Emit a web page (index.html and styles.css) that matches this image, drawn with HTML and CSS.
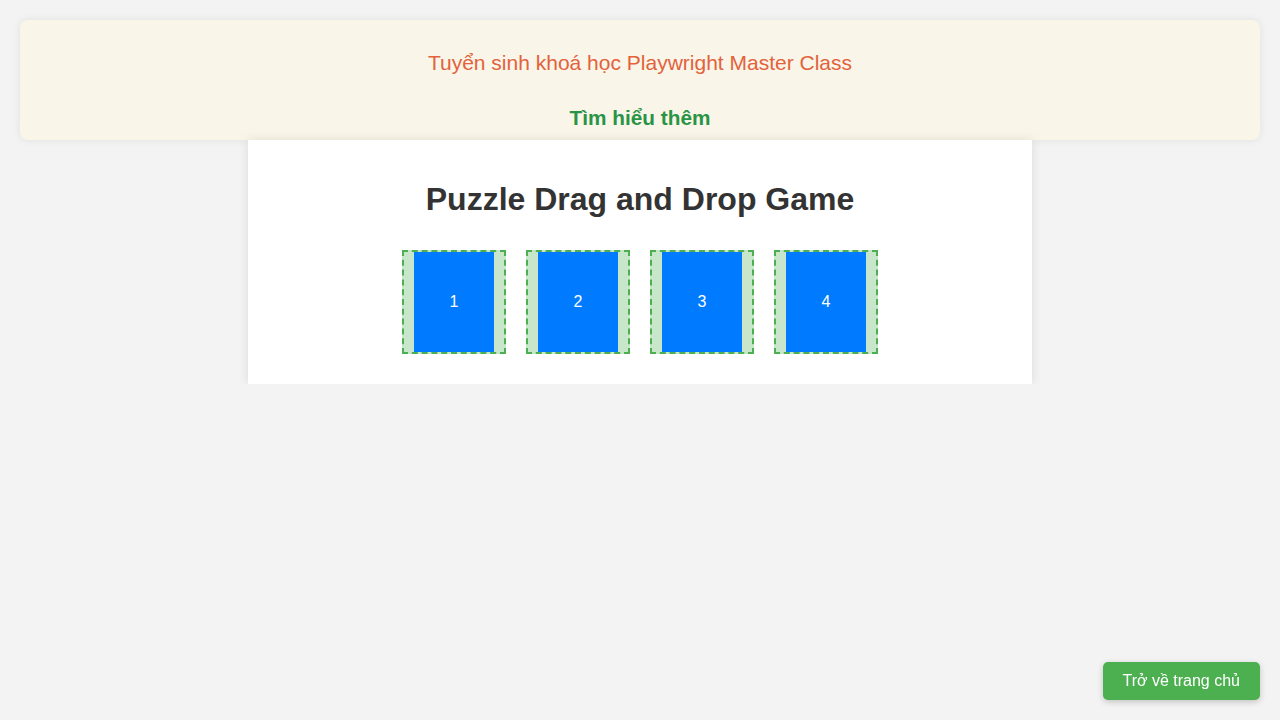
FILE: index.html
```html
<!DOCTYPE html>
<html lang="vi">
<head>
<meta charset="utf-8">
<title>Puzzle Drag and Drop Game</title>
<link rel="stylesheet" href="styles.css">
</head>
<body>
  <div class="banner">
    <p class="banner-title">Tuyển sinh khoá học Playwright Master Class</p>
    <a class="banner-link" href="#">Tìm hiểu thêm</a>
  </div>
  <div class="card">
    <h1 class="card-title">Puzzle Drag and Drop Game</h1>
    <div class="zones">
      <div class="zone"><div class="piece">1</div></div>
      <div class="zone"><div class="piece">2</div></div>
      <div class="zone"><div class="piece">3</div></div>
      <div class="zone"><div class="piece">4</div></div>
    </div>
  </div>
  <a class="home-btn" href="#">Trở về trang chủ</a>
</body>
</html>
```
FILE: styles.css
```css
* { box-sizing: border-box; }
html, body { margin: 0; padding: 0; }
body {
  background: #f3f3f3;
  font-family: "Liberation Sans", Arial, sans-serif;
  padding: 20px 20px 0;
}
.banner {
  position: relative;
  height: 120px;
  background: #f9f5e9;
  border-radius: 8px;
  box-shadow: 0 0 8px rgba(0,0,0,0.08);
  text-align: center;
  padding-top: 31px;
}
.banner-title {
  margin: 0;
  font-size: 21px;
  line-height: 24px;
  color: #e3623b;
}
.banner-link {
  display: inline-block;
  margin-top: 31px;
  font-size: 20.8px;
  line-height: 24px;
  font-weight: bold;
  color: #2a9446;
  text-decoration: none;
}
.card {
  position: relative;
  width: 784px;
  margin: 0 auto;
  background: #fff;
  padding: 20px 20px 20px;
  box-shadow: 0 0 10px rgba(0,0,0,0.1);
  text-align: center;
}
.card-title {
  margin: 21px 0 22px;
  font-size: 32px;
  line-height: 37px;
  font-weight: bold;
  color: #333;
}
.zones {
  display: flex;
  justify-content: center;
}
.zone {
  width: 104px;
  height: 104px;
  margin: 10px;
  border: 2px dashed #4caf50;
  background: #c8e6c9;
  display: flex;
  justify-content: center;
}
.piece {
  width: 80px;
  height: 100px;
  background: #007bff;
  color: #fff;
  font-size: 16px;
  display: flex;
  align-items: center;
  justify-content: center;
}
.home-btn {
  position: fixed;
  right: 20px;
  bottom: 20px;
  background: #4caf50;
  color: #fff;
  text-decoration: none;
  font-size: 16px;
  line-height: 18px;
  padding: 10px 20px;
  border-radius: 5px;
  box-shadow: 0 2px 6px rgba(0,0,0,0.2);
}
```
